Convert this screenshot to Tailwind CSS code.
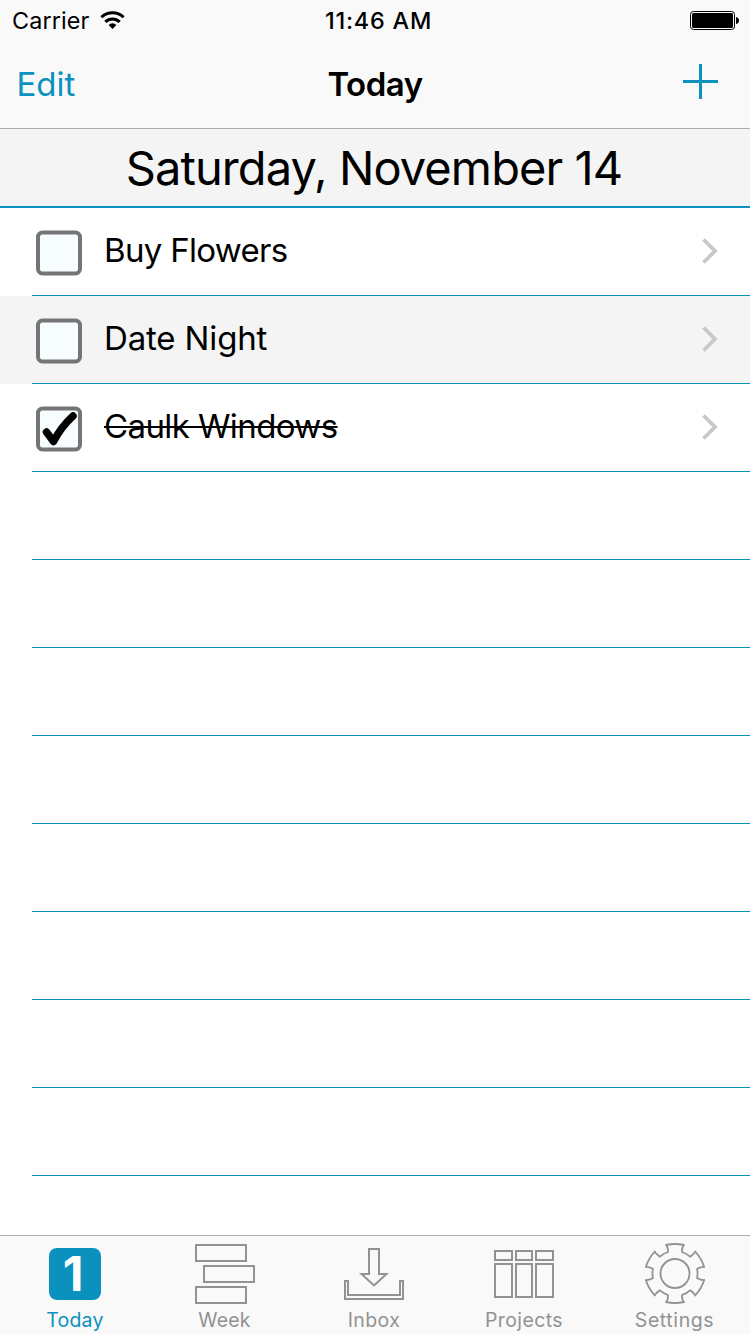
<!DOCTYPE html>
<html lang="en">
<head>
<meta charset="utf-8">
<title>Today</title>
<script src="https://cdn.jsdelivr.net/npm/@tailwindcss/browser@4"></script>
</head>
<body class="bg-white">
<div class="flex h-[1334px] w-[750px] flex-col overflow-hidden bg-white font-['Inter','Liberation_Sans',sans-serif] text-black">
  <header class="flex h-[129px] shrink-0 flex-col border-b border-[#acacac] bg-[#f9f9f9]">
    <div class="grid h-10 grid-cols-3 items-center text-[23.4px] leading-10 whitespace-nowrap">
      <div class="flex items-center pl-3">
        <span class="w-[88px] pt-[2px] leading-[38px] tracking-[0.1px]">Carrier</span>
        <svg class="h-[19px] w-[25px]" viewBox="0 0 25 19" fill="none" stroke="#000" stroke-width="3">
          <path d="M1.4 6.3a15.8 15.8 0 0 1 22.2 0M5.3 10.9a10.2 10.2 0 0 1 14.4 0"/>
          <path d="M8.6 13.9a5.6 5.6 0 0 1 7.8 0L12.5 18z" fill="#000" stroke="none"/>
        </svg>
      </div>
      <div class="pt-[2px] pl-[7px] text-center leading-[38px] font-[550] tracking-[0.8px]">11:46 AM</div>
      <div class="flex items-center justify-end pr-[11px]">
        <svg class="h-[19px] w-[49px]" viewBox="0 0 49 19">
          <rect x=".5" y=".5" width="44" height="18" rx="3" fill="none" stroke="#000"/>
          <rect x="2" y="2" width="41" height="15" rx="1.5"/>
          <path d="M46 6q3 .5 3 3.500t-3 3.500z"/>
        </svg>
      </div>
    </div>
    <div class="grid h-[88px] grid-cols-3 items-center text-[33px] leading-[88px]">
      <a class="pl-[16.5px] text-[#0a91bd]">Edit</a>
      <h1 class="text-center font-semibold tracking-[-0.5px]">Today</h1>
      <div class="flex justify-end pr-8">
        <svg class="mb-[5px] h-[35px] w-[35px]" viewBox="0 0 35 35"><path d="M16 0h3v16h16v3H19v16h-3V19H0v-3h16z" fill="#0a91bd"/></svg>
      </div>
    </div>
  </header>
  <h2 class="h-[79px] shrink-0 border-b-2 border-[#0a91bd] bg-[#f4f4f4] pr-[2px] text-center text-[47px] leading-[77px] tracking-[-0.9px]">Saturday, November 14</h2>
  <main class="flex min-h-0 flex-1 flex-col overflow-hidden text-[33px]">
    <div class="h-[88px] shrink-0 pl-8">
      <div class="flex h-[88px] items-center border-b border-[#0a91bd] pr-8 pl-1">
        <svg class="mt-[2px] h-[46px] w-[46px]" viewBox="0 0 46 46"><rect x="2" y="2.500" width="42" height="41" rx="4.500" fill="#f7fdff" stroke="#757575" stroke-width="4"/></svg>
        <span class="flex-1 pb-[2px] pl-[22px] tracking-[-0.7px]">Buy Flowers</span>
        <svg class="mb-[2px] h-[26px] w-[16px]" viewBox="0 0 16 26" fill="none" stroke="#c7c7cc" stroke-width="3.800"><path d="M1.500 1.500L13 13 1.500 24.500"/></svg>
      </div>
    </div>
    <div class="h-[88px] shrink-0 bg-[#f4f4f4] pl-8">
      <div class="flex h-[88px] items-center border-b border-[#0a91bd] pr-8 pl-1">
        <svg class="mt-[2px] h-[46px] w-[46px]" viewBox="0 0 46 46"><rect x="2" y="2.500" width="42" height="41" rx="4.500" fill="#f7fdff" stroke="#757575" stroke-width="4"/></svg>
        <span class="flex-1 pb-[2px] pl-[22px] tracking-[-0.15px]">Date Night</span>
        <svg class="mb-[2px] h-[26px] w-[16px]" viewBox="0 0 16 26" fill="none" stroke="#c7c7cc" stroke-width="3.800"><path d="M1.500 1.500L13 13 1.500 24.500"/></svg>
      </div>
    </div>
    <div class="h-[88px] shrink-0 pl-8">
      <div class="flex h-[88px] items-center border-b border-[#0a91bd] pr-8 pl-1">
        <svg class="mt-[2px] h-[46px] w-[46px]" viewBox="0 0 46 46"><rect x="2" y="2.500" width="42" height="41" rx="4.500" fill="#f7fdff" stroke="#757575" stroke-width="4"/><path d="M10.500 26L17.500 35.500Q25 21 37 10" fill="none" stroke="#000" stroke-width="7.500" stroke-linecap="round" stroke-linejoin="round"/></svg>
        <span class="flex-1 pb-[2px] pl-[22px] tracking-[-0.6px]"><s class="decoration-2">Caulk Windows</s></span>
        <svg class="mb-[2px] h-[26px] w-[16px]" viewBox="0 0 16 26" fill="none" stroke="#c7c7cc" stroke-width="3.800"><path d="M1.500 1.500L13 13 1.500 24.500"/></svg>
      </div>
    </div>
    <div class="ml-8 h-[88px] shrink-0 border-b border-[#0a91bd]"></div>
    <div class="ml-8 h-[88px] shrink-0 border-b border-[#0a91bd]"></div>
    <div class="ml-8 h-[88px] shrink-0 border-b border-[#0a91bd]"></div>
    <div class="ml-8 h-[88px] shrink-0 border-b border-[#0a91bd]"></div>
    <div class="ml-8 h-[88px] shrink-0 border-b border-[#0a91bd]"></div>
    <div class="ml-8 h-[88px] shrink-0 border-b border-[#0a91bd]"></div>
    <div class="ml-8 h-[88px] shrink-0 border-b border-[#0a91bd]"></div>
    <div class="ml-8 h-[88px] shrink-0 border-b border-[#0a91bd]"></div>
  </main>
  <nav class="grid h-[99px] shrink-0 grid-cols-5 border-t border-[#acacac] bg-[#f9f9f9] text-center text-[19.5px] leading-6 text-[#929292]">
    <div class="flex flex-col items-center pt-[7px] text-[#0a91bd]">
      <svg class="h-[62px] w-[62px] shrink-0" viewBox="0 0 62 62"><rect x="5" y="5" width="52" height="52" rx="8" fill="#0a91bd"/><text x="29" y="48" text-anchor="middle" font-size="48" font-weight="700" fill="#fff">1</text></svg>
      <span class="mt-[3px] tracking-[0.2px]">Today</span>
    </div>
    <div class="flex flex-col items-center pt-[7px]">
      <svg class="h-[62px] w-[62px] shrink-0" viewBox="0 0 62 62" fill="none" stroke="#929292" stroke-width="2"><path d="M2 2h50v16H2zM10 23h50v16H10zM2 44h50v16H2z"/></svg>
      <span class="mt-[3px] mr-[1px] tracking-[0.2px]">Week</span>
    </div>
    <div class="flex flex-col items-center pt-[7px] pr-[2px]">
      <svg class="h-[62px] w-[62px] shrink-0" viewBox="0 0 62 62" fill="none" stroke="#929292" stroke-width="2"><path d="M26 6h10v25h7.500L31 42.500 18.500 31H26zM2 38h3v14h52V38h3v18H2z"/></svg>
      <span class="mt-[3px] tracking-[0.4px]">Inbox</span>
    </div>
    <div class="flex flex-col items-center pt-[7px] pr-[2px]">
      <svg class="h-[62px] w-[62px] shrink-0" viewBox="0 0 62 62" fill="none" stroke="#929292" stroke-width="2"><path d="M2 8h17v9H2zM23 8h16v9H23zM43 8h17v9H43zM2 21h17v33H2zM23 21h16v33H23zM43 21h17v33H43z"/></svg>
      <span class="mt-[3px] tracking-[0.4px]">Projects</span>
    </div>
    <div class="flex flex-col items-center pt-[7px] pr-[1px]">
      <svg class="h-[62px] w-[62px] shrink-0" viewBox="-31 -30.5 62 62" fill="none" stroke="#929292" stroke-width="1.800" stroke-linejoin="round"><circle r="14.500"/><path d="M-7-21.500Q-7-27-9-28.500Q0-30.500 9-28.500Q7-27 7-21.500Q11.500-20 15.100-16.800Q19.500-20 20.200-22Q26.500-15 29.200-6.500Q27-7 22.100-4.700Q23 0 22.100 4.700Q27 7 29.200 6.500Q26.500 15 20.200 22Q19.500 20 15.100 16.800Q11.500 20 7 21.500Q7 27 9 28.500Q0 30.500-9 28.500Q-7 27-7 21.500Q-11.500 20-15.100 16.800Q-19.500 20-20.200 22Q-26.500 15-29.200 6.500Q-27 7-22.100 4.700Q-23 0-22.100-4.700Q-27-7-29.200-6.500Q-26.500-15-20.200-22Q-19.500-20-15.100-16.800Q-11.500-20-7-21.500z"/></svg>
      <span class="mt-[3px] tracking-[0.6px]">Settings</span>
    </div>
  </nav>
</div>
</body>
</html>
